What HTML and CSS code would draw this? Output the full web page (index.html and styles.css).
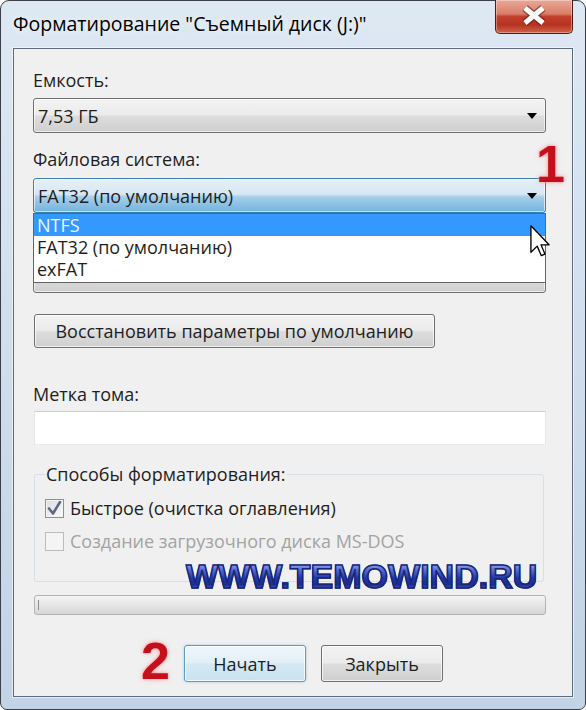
FILE: index.html
```html
<!doctype html>
<html>
	<head>
		<meta charset="utf-8">
		<link rel="stylesheet" href="styles.css">
	</head>
	<body>
		<div class="window">
			<div class="titlebar">
				<span class="title">Форматирование "Съемный диск (J:)"</span>
				<div class="close-btn">
					<svg width="78" height="33" viewBox="0 0 78 33">
						<path d="M30 9 L48 24 M48 9 L30 24" stroke="#5a1a12" stroke-opacity="0.55" stroke-width="8" fill="none"/>
						<path d="M30 9 L48 24 M48 9 L30 24" stroke="#fff" stroke-width="5" fill="none"/>
					</svg>
				</div>
			</div>

			<div class="client">
				<div class="label">Емкость:</div>
				<div class="combo">
					<span>7,53 ГБ</span>
					<span class="arrow"></span>
				</div>

				<div class="label label-gap">Файловая система:</div>
				<div class="drop-holder">
					<div class="combo combo-active">
						<span>FAT32 (по умолчанию)</span>
						<span class="arrow"></span>
					</div>
					<ul class="dropdown">
						<li class="selected">NTFS</li>
						<li>FAT32 (по умолчанию)</li>
						<li>exFAT</li>
					</ul>
					<svg class="cursor" width="20" height="33" viewBox="0 0 12 20">
						<path d="M0.5 0.5 L0.5 16.5 L4.3 12.8 L6.8 18.6 L9 17.6 L6.6 12 L11.5 12 Z" fill="#fff" stroke="#000" stroke-width="0.8" stroke-linejoin="round"/>
					</svg>
				</div>

				<div class="label label-gap"></div>
				<div class="combo"></div>

				<button class="btn btn-wide">Восстановить параметры по умолчанию</button>

				<div class="label label-big-gap">Метка тома:</div>
				<div class="textbox"></div>

				<fieldset class="group">
					<legend>Способы форматирования:</legend>
					<div class="check-row">
						<span class="checkbox checked">
							<svg width="17" height="17" viewBox="0 0 17 17">
								<path d="M3 8.5 L7 13.5 L14 2" stroke="#5b6a82" stroke-width="2.6" fill="none" stroke-linecap="round" stroke-linejoin="round"/>
							</svg>
						</span>
						<span>Быстрое (очистка оглавления)</span>
					</div>
					<div class="check-row disabled">
						<span class="checkbox"></span>
						<span>Создание загрузочного диска MS-DOS</span>
					</div>
				</fieldset>

				<div class="progress"></div>

				<div class="btn-row">
					<button class="btn btn-default">Начать</button>
					<button class="btn">Закрыть</button>
				</div>

				<span class="step step-1">1</span>
				<span class="step step-2">2</span>
				<span class="watermark">WWW.TEMOWIND.RU</span>
			</div>
		</div>
	</body>
</html>
```

FILE: styles.css
```css
html, body {
	margin: 0;
	padding: 0;
}

body {
	width: 586px;
	height: 710px;
	overflow: hidden;
	background: #fff;
	font-family: "Open Sans", "Noto Sans", sans-serif;
	font-size: 18px;
	color: #1e1e1e;
}

.window {
	box-sizing: border-box;
	width: 586px;
	height: 710px;
	display: flex;
	flex-direction: column;
	padding: 0 12px 12px 12px;
	border: 1px solid #3b4048;
	border-radius: 9px 9px 7px 7px;
	background: linear-gradient(#dde8f3, #c2d3e6);
}

.titlebar {
	height: 47px;
	display: flex;
	justify-content: space-between;
	align-items: flex-start;
}

.title {
	margin-top: 11px;
	font-size: 19.5px;
	line-height: 24px;
	color: #000;
	text-shadow: 0 0 8px rgba(255,255,255,0.9);
}

.close-btn {
	box-sizing: border-box;
	width: 78px;
	height: 34px;
	margin-top: -1px;
	border: 1px solid #4a1e18;
	border-top: none;
	border-radius: 0 0 5px 5px;
	background: linear-gradient(#eaa898 0%, #d97e6a 42%, #c2402c 50%, #b63322 75%, #d06448 100%);
	box-shadow: inset 0 0 0 1px rgba(255,255,255,0.35);
}

.close-btn svg {
	display: block;
	margin: -1px 0 0 -1px;
}

.client {
	flex: 1;
	position: relative;
	display: flex;
	flex-direction: column;
	padding: 21px 26px 13px 19px;
	border: 1px solid #5d6b7b;
	background: #f0f0f0;
	box-shadow: 0 0 0 1px rgba(255,255,255,0.55);
}

.label {
	height: 20px;
	line-height: 20px;
	margin-bottom: 8px;
}

.label-gap {
	margin-top: 16px;
	margin-bottom: 9px;
}

.label-big-gap {
	margin-top: 36px;
	margin-bottom: 7px;
}

.combo {
	box-sizing: border-box;
	height: 35px;
	display: flex;
	justify-content: space-between;
	align-items: center;
	padding: 0 8px 0 4px;
	border: 1px solid #707070;
	border-radius: 3px;
	background: linear-gradient(#f3f3f3 0%, #ebebeb 48%, #dddddd 52%, #cfcfcf 100%);
	box-shadow: inset 0 0 0 1px rgba(255,255,255,0.6);
}

.combo-active {
	border-color: #3c7fb1;
	background: linear-gradient(#e6f0f7 0%, #d6e7f3 46%, #a7cfea 54%, #71b3dd 100%);
}

.arrow {
	width: 0;
	height: 0;
	border-left: 5px solid transparent;
	border-right: 5px solid transparent;
	border-top: 6px solid #000;
}

.drop-holder {
	position: relative;
}

.dropdown {
	position: absolute;
	top: 100%;
	left: 0;
	right: 0;
	z-index: 2;
	box-sizing: border-box;
	height: 70px;
	margin: 0;
	padding: 0;
	list-style: none;
	border: 1px solid #646464;
	background: #fff;
}

.dropdown li {
	height: 22px;
	line-height: 22px;
	padding-left: 3px;
}

.dropdown li.selected {
	background: #3399ff;
	color: #eef5ff;
}

.cursor {
	position: absolute;
	left: 497px;
	top: 47px;
	z-index: 3;
}

.btn {
	box-sizing: border-box;
	height: 37px;
	padding: 0;
	font-family: inherit;
	font-size: 18px;
	color: #1e1e1e;
	border: 1px solid #707070;
	border-radius: 3px;
	background: linear-gradient(#f3f3f3 0%, #ebebeb 48%, #dddddd 52%, #cfcfcf 100%);
	box-shadow: inset 0 0 0 1px rgba(255,255,255,0.7);
}

.btn-wide {
	width: 401px;
	height: 34px;
	margin: 21px 0 0 1px;
}

.btn-default {
	border-color: #5d9ac6;
	background: linear-gradient(#eef6fb 0%, #e2eff7 48%, #d4e8f3 52%, #c9e2f0 100%);
	box-shadow: inset 0 0 0 1px rgba(255,255,255,0.8), 0 0 3px rgba(90,170,220,0.5);
}

.textbox {
	box-sizing: border-box;
	height: 34px;
	margin-left: 1px;
	border: 1px solid;
	border-color: #cdcdcd #e6e6e6 #ebebeb #e6e6e6;
	background: #fff;
}

.group {
	margin: 19px 2px 0 1px;
	padding: 0 10px 29px 10px;
	border: 1px solid #d5dfe5;
	border-radius: 3px;
}

.group legend {
	padding: 0 1px;
	line-height: 20px;
}

.check-row {
	display: flex;
	align-items: center;
	gap: 6px;
	height: 22px;
	margin-top: 11px;
}

.check-row:first-of-type {
	margin-top: 13px;
}

.check-row.disabled {
	color: #a3a3a3;
}

.checkbox {
	box-sizing: border-box;
	width: 19px;
	height: 19px;
	display: flex;
	align-items: center;
	justify-content: center;
	border: 1px solid #8f8f8f;
	background: linear-gradient(135deg, #dcdcdc, #fbfbfb);
	box-shadow: inset 0 0 0 1px #f4f4f4;
}

.check-row.disabled .checkbox {
	border-color: #bcbcbc;
	background: #f4f4f4;
}

.progress {
	position: relative;
	box-sizing: border-box;
	height: 20px;
	margin: 13px 0 0 1px;
	border: 1px solid #b2b2b2;
	border-radius: 3px;
	background: linear-gradient(#f4f4f4 0%, #e6e6e6 50%, #d6d6d6 100%);
}

.progress:before {
	content: "";
	position: absolute;
	left: 3px;
	top: 4px;
	width: 1px;
	height: 10px;
	background: #8a8a8a;
}

.btn-row {
	display: flex;
	gap: 15px;
	margin-top: 30px;
	padding-left: 151px;
}

.btn-row .btn {
	width: 122px;
}

.step {
	position: absolute;
	font-family: "Liberation Sans", Arial, sans-serif;
	font-weight: bold;
	line-height: 1;
	color: #c4101c;
	text-shadow: 0 0 2px #ff9c9c, 0 0 5px rgba(255,110,110,0.6);
}

.step-1 {
	left: 522px;
	top: 89px;
	font-size: 52px;
}

.step-2 {
	left: 127px;
	top: 586px;
	font-size: 52px;
}

.watermark {
	position: absolute;
	left: 172px;
	top: 510px;
	font-family: "Liberation Sans", Arial, sans-serif;
	font-weight: bold;
	font-size: 34px;
	line-height: 1;
	color: transparent;
	background: linear-gradient(#d6dcfa 0%, #5b74d8 30%, #2438a8 55%, #1c2c90 75%, #6c84e0 100%);
	-webkit-background-clip: text;
	background-clip: text;
	-webkit-text-stroke: 1.5px #1a2678;
}
```
